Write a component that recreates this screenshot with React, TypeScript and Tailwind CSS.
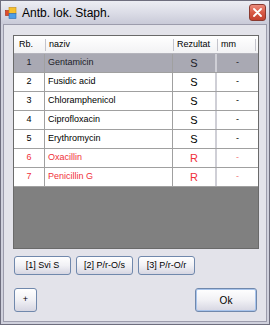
import React from 'react';

const rows = [
  { id: 1, name: 'Gentamicin', res: 'S', red: false },
  { id: 2, name: 'Fusidic acid', res: 'S', red: false },
  { id: 3, name: 'Chloramphenicol', res: 'S', red: false },
  { id: 4, name: 'Ciprofloxacin', res: 'S', red: false },
  { id: 5, name: 'Erythromycin', res: 'S', red: false },
  { id: 6, name: 'Oxacillin', res: 'R', red: true },
  { id: 7, name: 'Penicillin G', res: 'R', red: true },
];

const Btn: React.FC<{ className?: string; children: React.ReactNode }> = ({ className = '', children }) => (
  <button
    className={`flex items-center justify-center rounded-[3px] border border-[#7088ac] bg-gradient-to-b from-white via-[#f1f1f5] to-[#d6d6e2] text-[9px] text-black ${className}`}
  >
    {children}
  </button>
);

export default function App() {
  return (
    <div
      className="flex h-[325px] w-[270px] flex-col border border-[#6e6e7e] bg-[#cfd0dc]"
      style={{ fontFamily: '"Liberation Sans", Arial, sans-serif' }}
    >
      {/* Title bar */}
      <div className="flex h-[23px] items-center bg-gradient-to-b from-[#ecedf3] via-[#dcdde7] to-[#c9cad8] pl-[4px] pr-[3px]">
        <svg width="12" height="12" viewBox="0 0 12 12" className="mt-[1px]">
          <rect x="0.5" y="3.5" width="4" height="5" fill="#e04b2b" stroke="#a02a14" strokeWidth="0.6" />
          <rect x="4" y="0.5" width="7" height="6" fill="#f6c12e" stroke="#c58a12" strokeWidth="0.6" />
          <rect x="4" y="6.5" width="7" height="5" fill="#4e9de6" stroke="#2a6bb0" strokeWidth="0.6" />
        </svg>
        <span className="ml-[5px] text-[12px] text-black">Antb. lok. Staph.</span>
        <div className="ml-auto flex h-[17px] w-[17px] items-center justify-center rounded-[3px] border border-[#8a3a30] bg-gradient-to-b from-[#eb8b7c] via-[#d85a46] to-[#c2402f]">
          <svg width="9" height="9" viewBox="0 0 9 9">
            <path d="M1 1 L8 8 M8 1 L1 8" stroke="white" strokeWidth="1.8" strokeLinecap="round" />
          </svg>
        </div>
      </div>

      {/* Client area */}
      <div className="mx-[2px] mb-[2px] flex flex-1 flex-col border border-[#9c9cac] bg-[#e3e3ea] pl-[9px] pr-[7px] pt-[10px]">
        {/* Grid */}
        <div className="flex h-[214px] w-[246px] flex-col border border-[#6a6a6a] bg-[#808080]">
          <div className="flex h-[18px] items-center border-b border-[#b4b4bc] bg-gradient-to-b from-white to-[#f2f2f4] text-[9px] text-black">
            <div className="flex w-[31px] items-center pl-[5px]">Rb.</div>
            <div className="flex w-[128px] items-center">
              <span className="h-[12px] w-px bg-[#c4c4cc]" />
              <span className="pl-[3px]">naziv</span>
            </div>
            <div className="flex w-[44px] items-center">
              <span className="h-[12px] w-px bg-[#c4c4cc]" />
              <span className="pl-[3px]">Rezultat</span>
            </div>
            <div className="flex flex-1 items-center">
              <span className="h-[12px] w-px bg-[#c4c4cc]" />
              <span className="pl-[3px]">mm</span>
              <span className="ml-auto mr-[2px] h-[12px] w-px bg-[#c4c4cc]" />
            </div>
          </div>
          {rows.map((r) => {
            const sel = r.id === 1;
            const color = r.red ? 'text-[#f0303a]' : sel ? 'text-[#202028]' : 'text-black';
            return (
              <div
                key={r.id}
                className={`flex h-[19px] border-b border-[#a0a0a0] text-[9px] ${sel ? 'bg-[#a9a9b3]' : 'bg-white'} ${color}`}
              >
                <div className="flex w-[31px] items-center justify-center border-r border-[#a0a0a0]">{r.id}</div>
                <div className="flex w-[128px] items-center border-r border-[#a0a0a0] pl-[3px]">{r.name}</div>
                <div className="flex w-[44px] items-center justify-center border-r-2 border-[#cfcfd6] text-[11px]">{r.res}</div>
                <div className={`flex flex-1 items-center justify-center ${r.red ? 'text-[#f27a80]' : ''}`}>-</div>
              </div>
            );
          })}
        </div>

        {/* Quick buttons */}
        <div className="ml-[1px] mt-[7px] flex gap-[5px]">
          <Btn className="h-[19px] w-[57px]">[1] Svi S</Btn>
          <Btn className="h-[19px] w-[57px]">[2] P/r-O/s</Btn>
          <Btn className="h-[19px] w-[57px]">[3] P/r-O/r</Btn>
        </div>

        {/* Bottom buttons */}
        <div className="ml-[1px] mt-[13px] flex">
          <Btn className="h-[24px] w-[23px]">+</Btn>
          <Btn className="ml-auto mr-[2px] h-[24px] w-[62px] border-[#3c64a0] shadow-[inset_0_0_0_1px_#a8c4ec] text-[10px]">Ok</Btn>
        </div>
      </div>
    </div>
  );
}
